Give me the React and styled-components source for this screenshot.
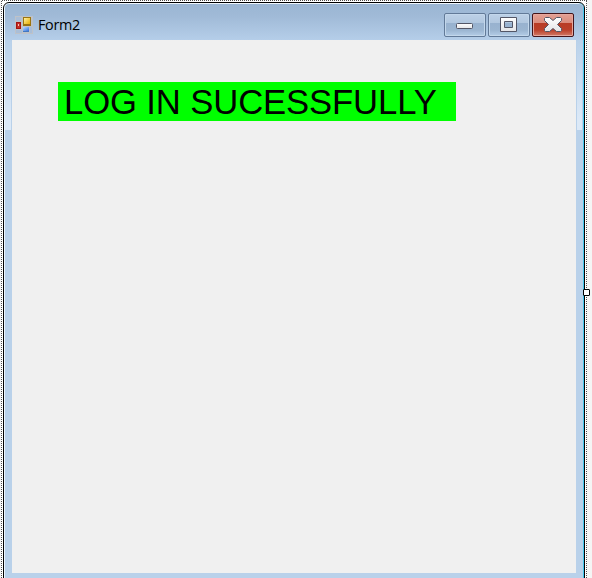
import React from "react";
import styled, { createGlobalStyle } from "styled-components";

const GlobalStyle = createGlobalStyle`
  body { margin: 0; background: #f5f5f5; overflow: hidden; }
  * { box-sizing: border-box; }
`;

const dots = (dir) =>
  `repeating-linear-gradient(${dir}, #ffffff 0 1px, #505050 1px 2px)`;

const Designer = styled.div`
  position: relative;
  width: 592px;
  height: 578px;
  overflow: hidden;
  background: #f5f5f5;
`;

const Selection = styled.div`
  width: 586px;
  height: 578px;
  margin-left: 1px;
  padding: 2px 2px 0 2px;
  background:
    ${dots("to right")} 0 0 / 100% 1px no-repeat,
    ${dots("to bottom")} 0 0 / 1px 100% no-repeat,
    ${dots("to bottom")} 100% 0 / 1px 100% no-repeat,
    #ffffff;
`;

const Window = styled.div`
  width: 582px;
  height: 590px;
  border: 1px solid #000;
  border-radius: 6px 6px 0 0;
  box-shadow: inset -1px 0 #43c8ee, inset 1px 1px #eef6fd;
  padding: 1px 1px 0 1px;
  overflow: hidden;
  display: flex;
  flex-direction: column;
`;

const Frame = styled.div`
  flex: 1;
  display: flex;
  flex-direction: column;
  border-radius: 4px 4px 0 0;
  background:
    linear-gradient(#b9d1ea, #dce9f7 88%, #dce9f7) 0 36px / 6px 90px no-repeat,
    linear-gradient(#b9d1ea, #dce9f7 88%, #dce9f7) 572px 36px / 5px 90px no-repeat,
    linear-gradient(#9bb6d3 0, #a0bad7 12px, #b5cee9 36px, #b9d1ea 37px);
`;

const TitleBar = styled.div`
  height: 36px;
  padding: 9px 9px 0 10px;
  display: flex;
  align-items: flex-start;
`;

const Title = styled.span`
  flex: 1;
  margin: 2px 0 0 5px;
  font: 14.4px/20px "Open Sans", "Noto Sans", sans-serif;
  letter-spacing: -0.35px;
  color: #000;
`;

const Controls = styled.div`
  display: flex;
  gap: 2px;
`;

const CaptionButton = styled.button`
  width: 42px;
  height: 24px;
  padding: 0;
  display: flex;
  border-radius: 2px;
  border: 1px solid ${(p) => (p.$close ? "#43141a" : "#627a98")};
  box-shadow: inset 0 0 0 1px ${(p) => (p.$close ? "#e6a79d" : "#c3d7eb")};
  background: ${(p) =>
    p.$close
      ? "linear-gradient(#e4a195 0, #d98b7c 9px, #b83b25 9px, #bb402a 16px, #d17b68 22px)"
      : "linear-gradient(#bdd1e7 0, #b1c7df 9px, #98b2cf 9px, #9bb5d1 16px, #b4cde7 22px)"};
`;

const Client = styled.main`
  width: 564px;
  height: 533px;
  margin-left: 7px;
  background: #f0f0f0;
  padding: 42px 0 0 46px;
`;

const Message = styled.div`
  width: 398px;
  height: 39px;
  padding-left: 6px;
  background: #00ff00;
  color: #000;
  font: 34.67px/40px "Liberation Sans", Arial, sans-serif;
  letter-spacing: -0.12px;
  white-space: pre;
`;

const Handle = styled.div`
  position: absolute;
  left: 583px;
  top: 289px;
  width: 7px;
  height: 7px;
  border: 1px solid #000;
  border-radius: 1px;
  background: #fff;
`;

const IconSvg = styled.svg`
  flex: none;
  margin-top: 3px;
`;

function FormIcon() {
  return (
    <IconSvg width="18" height="18" viewBox="0 0 18 18" shapeRendering="crispEdges">
      <defs>
        <linearGradient id="gold" x2="1" y2="1">
          <stop stopColor="#fff0a0" />
          <stop offset="1" stopColor="#e8ad00" />
        </linearGradient>
        <linearGradient id="sky" x2="1" y2="1">
          <stop stopColor="#b9d8ff" />
          <stop offset="1" stopColor="#3272dc" />
        </linearGradient>
      </defs>
      <path d="M0 0H18V18H0Z" fill="#bec2c8" />
      <path d="M1 1H6V5H1ZM1 14H7V17H1ZM15 11H17V17H15Z" fill="#a9bed8" />
      <path d="M1 6H6V13H1Z" fill="#a51410" />
      <path d="M2 7H5V12H2Z" fill="#c42c24" />
      <path d="M3 8H4V10H3Z" fill="#fac1b8" />
      <path d="M8 1H16V10H8Z" fill="#9a7410" />
      <path d="M9 2H15V8H9Z" fill="url(#gold)" />
      <path d="M8 11H14V16H8Z" fill="#4377bf" />
      <path d="M8 11H14V15H8Z" fill="url(#sky)" />
    </IconSvg>
  );
}

function Glyph({ children }) {
  return (
    <svg width="40" height="22" viewBox="0 0 40 22">
      <defs>
        <linearGradient id="silver" x2="0" y2="1">
          <stop stopColor="#ffffff" />
          <stop offset="1" stopColor="#e4e5e8" />
        </linearGradient>
      </defs>
      {children}
    </svg>
  );
}

export default function App() {
  return (
    <Designer>
      <GlobalStyle />
      <Selection>
        <Window>
          <Frame>
            <TitleBar>
              <FormIcon />
              <Title>Form2</Title>
              <Controls>
                <CaptionButton aria-label="Minimize">
                  <Glyph>
                    <rect x="11.5" y="9.5" width="16" height="5" rx="1" fill="url(#silver)" stroke="#535666" />
                  </Glyph>
                </CaptionButton>
                <CaptionButton aria-label="Maximize">
                  <Glyph>
                    <path
                      d="M11.5 3.5H27.5V17.5H11.5ZM15.5 7.5V13.5H23.5V7.5Z"
                      fill="url(#silver)"
                      fillRule="evenodd"
                      stroke="#535666"
                      strokeLinejoin="round"
                    />
                  </Glyph>
                </CaptionButton>
                <CaptionButton $close aria-label="Close">
                  <Glyph>
                    <path
                      d="M12.5 3.5H16.5L20 6.5L23.5 3.5H27.5L28.5 4.5V6.5L24.5 10.5L28.5 14.5V16.5L27.5 17.5H23.5L20 14.5L16.5 17.5H12.5L11.5 16.5V14.5L15.5 10.5L11.5 6.5V4.5Z"
                      fill="url(#silver)"
                      stroke="#535666"
                      strokeLinejoin="round"
                    />
                  </Glyph>
                </CaptionButton>
              </Controls>
            </TitleBar>
            <Client>
              <Message>LOG IN SUCESSFULLY</Message>
            </Client>
          </Frame>
        </Window>
      </Selection>
      <Handle />
    </Designer>
  );
}
